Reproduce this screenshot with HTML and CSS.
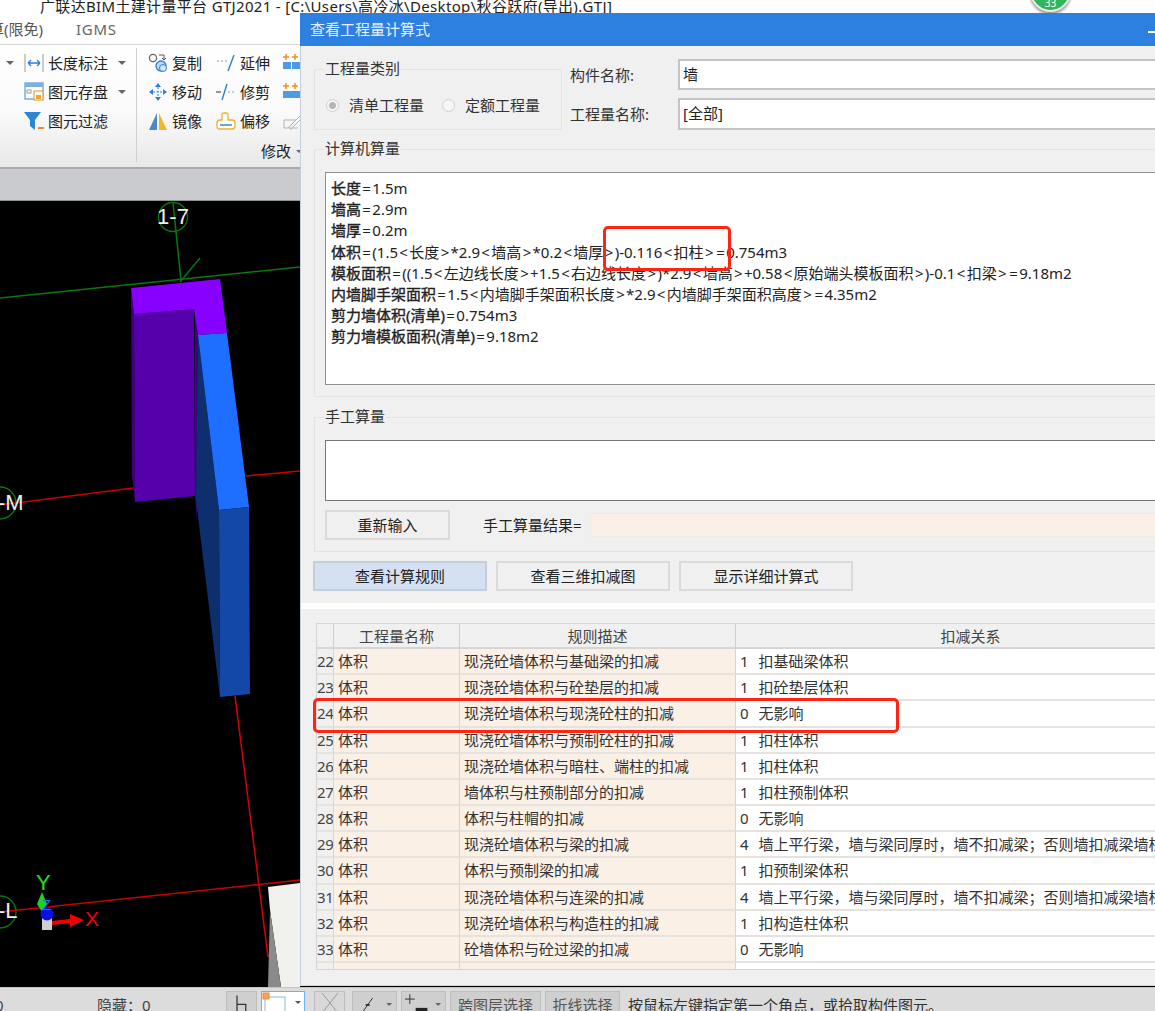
FILE: index.html
```html
<!DOCTYPE html>
<html lang="zh">
<head>
<meta charset="utf-8">
<title>查看工程量计算式</title>
<link rel="stylesheet" href="styles.css">
</head>
<body>
<div class="app">
  <div class="titlebar"><span>广联达BIM土建计量平台 GTJ2021 - [C:\Users\高冷冰\Desktop\秋谷跃府(导出).GTJ]</span></div>
  <div class="menubar"><span class="menu-a">算(限免)</span><span class="menu-b">IGMS</span></div>
  <div class="ribbon">
    <div class="rgroup rgroup-a">
      <div class="tool"><svg class="ico" viewBox="0 0 20 20"><path d="M1 1v18M19 1v18" stroke="#9a9a9a" fill="none"/><path d="M4 10h12M4 10l3-3M4 10l3 3M16 10l-3-3M16 10l-3 3" stroke="#2d7fd8" stroke-width="1.3" fill="none"/></svg><span>长度标注</span><i class="caret"></i></div>
      <div class="tool"><svg class="ico" viewBox="0 0 20 20"><rect x="1" y="1" width="18" height="16" fill="#fff" stroke="#6fa8e0" stroke-width="1.4"/><rect x="1" y="1" width="18" height="4" fill="#7db0e6"/><rect x="3" y="8" width="4" height="3" fill="none" stroke="#999"/><rect x="10" y="9" width="9" height="9" fill="#fff" stroke="#e8a33c" stroke-width="1.2"/><rect x="12" y="13" width="5" height="4" fill="#f0a030"/></svg><span>图元存盘</span><i class="caret"></i></div>
      <div class="tool"><svg class="ico" viewBox="0 0 20 20"><path d="M0 1h17l-6 8v10l-5-4V9z" fill="#2b86d6"/><path d="M14 16h6v2h-6z" fill="#f08a30"/></svg><span>图元过滤</span></div>
      <i class="caret caret-left"></i>
    </div>
    <div class="rgroup rgroup-b">
      <div class="rgrid">
        <div class="tool"><svg class="ico" viewBox="0 0 20 20"><circle cx="5" cy="5" r="3.6" fill="#fff" stroke="#666" stroke-width="1.3"/><circle cx="13" cy="13" r="5" fill="#bcd9f2" stroke="#2d7fd8" stroke-width="1.3"/><circle cx="15" cy="15" r="3.5" fill="#d6e8f8" stroke="#2d7fd8"/><path d="M11 2h5v4M14 5l2 2 2-2" stroke="#555" fill="none"/></svg><span>复制</span></div>
        <div class="tool"><svg class="ico" viewBox="0 0 20 20"><path d="M10 1l-3 4h6zM10 19l-3-4h6zM1 10l4-3v6zM19 10l-4-3v6z" fill="#2d7fd8"/><path d="M10 5v10M5 10h10" stroke="#2d7fd8" stroke-dasharray="2 1.5"/></svg><span>移动</span></div>
        <div class="tool"><svg class="ico" viewBox="0 0 20 20"><path d="M9 2v17H1z" fill="#4a86d0"/><path d="M11 2v17h8z" fill="#f6b822"/></svg><span>镜像</span></div>
        <div class="tool"><svg class="ico" viewBox="0 0 20 20"><path d="M1 8h12" stroke="#8aa0b8" stroke-dasharray="2 2" fill="none"/><path d="M18 2l-6 16" stroke="#2d7fd8" stroke-width="1.4"/></svg><span>延伸</span></div>
        <div class="tool"><svg class="ico" viewBox="0 0 20 20"><path d="M0 10h5" stroke="#333"/><path d="M12 10h8" stroke="#8aa0b8" stroke-dasharray="2 2"/><path d="M11 2L6 18" stroke="#2d7fd8" stroke-width="1.4"/></svg><span>修剪</span></div>
        <div class="tool"><svg class="ico" viewBox="0 0 20 20"><path d="M6 9V4q0-2 2-2h2q2 0 2 2v5h4q3 0 3 3v3q0 3-3 3H3q-2 0-2-3v-3q0-3 3-3z" fill="#fff" stroke="#f0b030" stroke-width="1.3"/><path d="M4 14h12" stroke="#6fa8e0" stroke-width="2"/></svg><span>偏移</span></div>
        <div class="tool tool-icon"><svg class="ico" viewBox="0 0 20 20"><path d="M3 1v6M0 4h6M12 1v6M9 4h6" stroke="#f09020" stroke-width="1.5"/><path d="M0 9h8v7H0zM9 9h8v7H9z" fill="#4f9be2"/></svg></div>
        <div class="tool tool-icon"><svg class="ico" viewBox="0 0 20 20"><path d="M3 1v6M0 4h6M12 1v6M9 4h6" stroke="#f09020" stroke-width="1.5"/><path d="M0 9h20v7H0z" fill="#4f9be2"/></svg></div>
        <div class="tool tool-icon"><svg class="ico" viewBox="0 0 20 20"><path d="M1 17V9l12-0M1 17h14M5 17l12-12 2 2L7 19" stroke="#b4b4b4" fill="none"/></svg></div>
      </div>
      <div class="rlabel"><span>修改</span><i class="caret caret-small"></i></div>
    </div>
  </div>
  <div class="band"></div>
  <div class="viewport">
    <svg class="scene" viewBox="0 201 300 786">
      <path d="M0 298L300 267" stroke="#0a780a" stroke-width="1.5"/>
      <path d="M173 203l8 77M180 282l20-24" stroke="#0a780a" stroke-width="1.5"/>
      <circle cx="173" cy="217" r="14.5" fill="none" stroke="#0a780a" stroke-width="1.3"/>
      <text class="lbl" x="173" y="224" text-anchor="middle">1-7</text>
      <path d="M0 505L133 488M246 476L300 471" stroke="#c80000" stroke-width="1.5"/>
      <circle cx="0" cy="503" r="16" fill="none" stroke="#0a780a" stroke-width="1.3"/>
      <text class="lbl" x="-2" y="510">-M</text>
      <path d="M235 696l33 261" stroke="#d80000" stroke-width="1.5"/>
      <path d="M0 912L300 880" stroke="#c80000" stroke-width="1.5"/>
      <circle cx="0" cy="912" r="16" fill="none" stroke="#0a780a" stroke-width="1.3"/>
      <text class="lbl" x="-2" y="918">-L</text>
      <path d="M131 288L134 314L135 502L132 475Z" fill="#3f0082"/>
      <path d="M134 314L194 309L195 496L135 502Z" fill="#5500ab"/>
      <path d="M195 309L198 335L197 520L195 496Z" fill="#3f0082"/>
      <path d="M131 288L220 279L227 333L198 335L194 309L134 314Z" fill="#8800ff"/>
      <path d="M198 335L219 510L220 697L196 500Z" fill="#0d2f6e"/>
      <path d="M198 335L227 333L249 507L219 510Z" fill="#1e6fff"/>
      <path d="M219 510L249 507L250 694L220 697Z" fill="#1448a8"/>
      <path d="M268 887L300 883V987H281L270 910Z" fill="#f0f0ec"/>
      <path d="M270 910L281 987H268Z" fill="#8a8a8a"/>
      <path d="M42 892l-5 12 5 8 5-8z" fill="#1fd01f"/>
      <rect x="42" y="918" width="10" height="12" fill="#cfcfcf"/>
      <circle cx="47" cy="914" r="6.5" fill="#0a10e0"/>
      <path d="M52 921l18-2v-5l14 6-14 7v-4l-18 2z" fill="#f00000"/>
      <text class="axis axis-y" x="36" y="890">Y</text>
      <text class="axis axis-z" x="42" y="910">Z</text>
      <text class="axis axis-x" x="85" y="926">X</text>
    </svg>
  </div>
  <div class="statusbar">
    <span class="st-zero">0</span>
    <span class="st-hidden">隐藏：0</span>
    <span class="st-btn st-h"><svg class="st-ico" viewBox="0 0 16 16"><path d="M4 2v14M4 9h7v7" stroke="#333" fill="none"/></svg></span>
    <span class="st-btn st-sel"><svg class="st-ico-wide" viewBox="0 0 40 20"><rect x="2" y="5" width="20" height="18" fill="#fff" stroke="#8ab6e6"/><rect x="0" y="1" width="6" height="6" fill="#f4a460" stroke="#e88a30"/><path d="M32 9h6l-3 3z" fill="#555"/></svg></span>
    <span class="st-btn st-x"><svg class="st-ico" viewBox="0 0 20 20"><path d="M2 0l16 20M18 0L2 20" stroke="#9a9a9a" fill="none"/></svg></span>
    <span class="st-btn st-tool"><svg class="st-ico-wide" viewBox="0 0 44 20"><path d="M10 20L20 6" stroke="#333"/><path d="M13 13h4" stroke="#333" stroke-width="2"/><path d="M34 11h6l-3 3z" fill="#666"/></svg></span>
    <span class="st-btn st-tool"><svg class="st-ico-wide" viewBox="0 0 44 20"><path d="M8 2v10M3 7h10" stroke="#333"/><path d="M14 16h12v4H14z" fill="#222"/><path d="M34 11h6l-3 3z" fill="#666"/></svg></span>
    <span class="st-btn st-text st-a">跨图层选择</span>
    <span class="st-btn st-text st-b">折线选择</span>
    <span class="st-hint">按鼠标左键指定第一个角点，或拾取构件图元。</span>
  </div>
</div>

<div class="badge"><span>33</span></div>

<div class="dialog">
  <div class="dlg-title"><span>查看工程量计算式</span><i class="dlg-min"></i></div>
  <div class="dlg-top">
    <fieldset class="fs fs-type">
      <legend>工程量类别</legend>
      <div class="radios">
        <span class="radio radio-on"></span><span class="r-text">清单工程量</span>
        <span class="radio radio-2"></span><span class="r-text">定额工程量</span>
      </div>
    </fieldset>
    <div class="form">
      <label>构件名称:</label><div class="field f1">墙</div>
      <label>工程量名称:</label><div class="field f2">[全部]</div>
    </div>
  </div>
  <fieldset class="fs fs-calc">
    <legend>计算机算量</legend>
    <div class="calc">
      <div><b>长度</b><u>=</u>1.5m</div>
      <div><b>墙高</b><u>=</u>2.9m</div>
      <div><b>墙厚</b><u>=</u>0.2m</div>
      <div><b>体积</b><u>=</u>(1.5<u>&lt;</u>长度<u>&gt;</u>*2.9<u>&lt;</u>墙高<u>&gt;</u>*0.2<u>&lt;</u>墙厚<u>&gt;</u>)-0.116<u>&lt;</u>扣柱<u>&gt;</u><u>=</u>0.754m3</div>
      <div><b>模板面积</b><u>=</u>((1.5<u>&lt;</u>左边线长度<u>&gt;</u>+1.5<u>&lt;</u>右边线长度<u>&gt;</u>)*2.9<u>&lt;</u>墙高<u>&gt;</u>+0.58<u>&lt;</u>原始端头模板面积<u>&gt;</u>)-0.1<u>&lt;</u>扣梁<u>&gt;</u><u>=</u>9.18m2</div>
      <div><b>内墙脚手架面积</b><u>=</u>1.5<u>&lt;</u>内墙脚手架面积长度<u>&gt;</u>*2.9<u>&lt;</u>内墙脚手架面积高度<u>&gt;</u><u>=</u>4.35m2</div>
      <div><b>剪力墙体积(清单)</b><u>=</u>0.754m3</div>
      <div><b>剪力墙模板面积(清单)</b><u>=</u>9.18m2</div>
    </div>
  </fieldset>
  <fieldset class="fs fs-manual">
    <legend>手工算量</legend>
    <div class="manual-box"></div>
    <div class="manual-row">
      <button class="btn btn-reset">重新输入</button>
      <span class="manual-label">手工算量结果=</span>
      <div class="manual-result"></div>
    </div>
  </fieldset>
  <div class="actions">
    <button class="btn btn-act btn-on">查看计算规则</button>
    <button class="btn btn-act">查看三维扣减图</button>
    <button class="btn btn-act">显示详细计算式</button>
  </div>
  <div class="stripe"></div>
  <div class="lower">
    <div class="grid">
      <div class="row head"><div></div><div>工程量名称</div><div>规则描述</div><div>扣减关系</div></div>
      <div class="row"><div>22</div><div>体积</div><div>现浇砼墙体积与基础梁的扣减</div><div>1&nbsp;&nbsp;扣基础梁体积</div></div>
      <div class="row"><div>23</div><div>体积</div><div>现浇砼墙体积与砼垫层的扣减</div><div>1&nbsp;&nbsp;扣砼垫层体积</div></div>
      <div class="row"><div>24</div><div>体积</div><div>现浇砼墙体积与现浇砼柱的扣减</div><div>0&nbsp;&nbsp;无影响</div></div>
      <div class="row"><div>25</div><div>体积</div><div>现浇砼墙体积与预制砼柱的扣减</div><div>1&nbsp;&nbsp;扣柱体积</div></div>
      <div class="row"><div>26</div><div>体积</div><div>现浇砼墙体积与暗柱、端柱的扣减</div><div>1&nbsp;&nbsp;扣柱体积</div></div>
      <div class="row"><div>27</div><div>体积</div><div>墙体积与柱预制部分的扣减</div><div>1&nbsp;&nbsp;扣柱预制体积</div></div>
      <div class="row"><div>28</div><div>体积</div><div>体积与柱帽的扣减</div><div>0&nbsp;&nbsp;无影响</div></div>
      <div class="row"><div>29</div><div>体积</div><div>现浇砼墙体积与梁的扣减</div><div>4&nbsp;&nbsp;墙上平行梁，墙与梁同厚时，墙不扣减梁；否则墙扣减梁墙柱相交部分</div></div>
      <div class="row"><div>30</div><div>体积</div><div>体积与预制梁的扣减</div><div>1&nbsp;&nbsp;扣预制梁体积</div></div>
      <div class="row"><div>31</div><div>体积</div><div>现浇砼墙体积与连梁的扣减</div><div>4&nbsp;&nbsp;墙上平行梁，墙与梁同厚时，墙不扣减梁；否则墙扣减梁墙柱相交部分</div></div>
      <div class="row"><div>32</div><div>体积</div><div>现浇砼墙体积与构造柱的扣减</div><div>1&nbsp;&nbsp;扣构造柱体积</div></div>
      <div class="row"><div>33</div><div>体积</div><div>砼墙体积与砼过梁的扣减</div><div>0&nbsp;&nbsp;无影响</div></div>
      <div class="row tail"><div></div><div></div><div></div><div></div></div>
    </div>
  </div>
</div>

<div class="mark mark-a"></div>
<div class="mark mark-b"></div>
</body>
</html>
```

FILE: styles.css
```css
* { box-sizing: border-box; }
html, body { margin: 0; padding: 0; }
body {
  position: relative;
  width: 1155px;
  height: 1011px;
  overflow: hidden;
  background: #000;
  color: #222;
  font: 15px/20px "Noto Sans", "Noto Sans CJK SC", sans-serif;
}
b { font-weight: 400; -webkit-text-stroke: 0.35px #222; }
i { display: block; font-style: normal; }
u { text-decoration: none; padding: 0 1.35px; }

.app { display: flex; flex-direction: column; width: 1155px; height: 1011px; }
.titlebar { position: relative; z-index: 1; height: 13px; padding-left: 40px; line-height: 13px; letter-spacing: 0.33px; white-space: nowrap; flex: none; background: #fff; }
.menubar { height: 32px; background: #fff; border-bottom: 1px solid #d6d6d6; display: flex; align-items: center; color: #555; flex: none; white-space: nowrap; }
.menu-a { margin-left: -11px; width: 87px; }
.menu-b { color: #666; letter-spacing: 0.7px; }

.ribbon { height: 122px; display: flex; flex: none; background: linear-gradient(#fff, #fafafa 55%, #e8e8e8); }
.rgroup { position: relative; padding-top: 3px; }
.rgroup-a { width: 137px; padding-left: 24px; }
.rgroup-a::after { content: ""; position: absolute; right: 0; top: 3px; bottom: 5px; width: 1px; background: #cfcfcf; }
.rgrid { display: grid; grid-template-rows: repeat(3, 29px); grid-template-columns: 68px 67px 40px; grid-auto-flow: column; padding-left: 11px; }
.tool { display: flex; align-items: center; height: 29px; gap: 4px; white-space: nowrap; }
.ico { width: 20px; height: 20px; flex: none; }
.rlabel { display: flex; align-items: center; height: 32px; padding-left: 124px; }
.caret { width: 0; height: 0; border: 4px solid transparent; border-top-color: #666; border-bottom: 0; margin-left: 6px; }
.caret-left { position: absolute; left: 6px; top: 16px; margin: 0; }
.caret-small { border-width: 3px; border-bottom: 0; margin-left: 5px; }

.band { height: 34px; flex: none; background: #c9cbce; border-top: 2px solid #a9abad; border-bottom: 1px solid #8f9194; }
.viewport { flex: 1; background: #000; overflow: hidden; }
.scene { display: block; width: 300px; height: 786px; overflow: hidden; }
.lbl { fill: #eee; font: 22px "Liberation Sans", sans-serif; }
.axis { font: 22px "Liberation Sans", sans-serif; }
.axis-y { fill: #22e022; }
.axis-z { fill: #1a6cff; font-size: 15px; }
.axis-x { fill: #f00000; font-size: 21px; }

.statusbar { height: 24px; flex: none; background: #dcdcdc; display: flex; align-items: flex-start; overflow: hidden; padding-top: 3px; white-space: nowrap; color: #444; border-top: 1px solid #c4c4c4; }
.st-zero { margin-left: -5px; width: 102px; padding-top: 4px; }
.st-hidden { width: 129px; padding-top: 4px; }
.st-btn { display: block; height: 26px; background: #cfcfcf; border: 1px solid #bdbdbd; flex: none; }
.st-h { width: 31px; }
.st-sel { width: 44px; margin-left: 4px; background: #fff; border: 1px solid #6db2f0; }
.st-x { width: 31px; margin-left: 9px; background: #d8d8d8; }
.st-tool { width: 45px; margin-left: 4px; }
.st-x + .st-tool { margin-left: 7px; }
.st-ico { display: block; width: 20px; height: 20px; margin: 1px 0 0 5px; }
.st-ico-wide { display: block; width: 100%; height: 20px; }
.st-text { padding: 3px 0 0; text-align: center; color: #555; }
.st-a { width: 91px; margin-left: 4px; }
.st-b { width: 75px; margin-left: 4px; }
.st-hint { margin-left: 8px; padding-top: 4px; color: #333; }

.badge { position: absolute; z-index: 2; left: 1030px; top: -29px; width: 41px; height: 41px; border-radius: 50%; background: #2fb65a; border: 2px solid #e8efe8; box-shadow: 0 2px 3px rgba(0,0,0,.45); color: #fff; font-size: 10px; line-height: 12px; text-align: center; }
.badge span { position: absolute; left: 0; right: 0; bottom: 1px; }

.dialog { position: absolute; z-index: 2; left: 300px; top: 13px; width: 900px; height: 973px; background: #f0f0f0; border-left: 1px solid #c3cfdc; border-bottom: 1px solid #cfd6de; }
.dlg-title { height: 33px; margin-left: -1px; background: #2d7fe0; color: #e8f1fb; line-height: 33px; padding-left: 10px; position: relative; }
.dlg-min { position: absolute; left: 848px; top: 18px; width: 8px; height: 2px; background: #fff; }

.dlg-top { display: flex; padding: 13px 0 0 13px; }
.fs { margin: 0; padding: 0; border: 1px solid #e4e4e4; min-width: 0; }
.fs legend { margin-left: 9px; padding: 0 1px; line-height: 20px; color: #333; transform: translateY(-1px); }
.fs-type { width: 248px; height: 71px; flex: none; }
.radios { display: flex; align-items: center; padding: 16px 0 0 11px; }
.radio { width: 13px; height: 13px; border-radius: 50%; background: #f6f6f6; border: 1px solid #d0d0d0; flex: none; }
.radio-on { background: radial-gradient(circle, #b5b5b5 0 3px, #f6f6f6 4px); }
.radio-2 { margin-left: 18px; }
.r-text { margin-left: 10px; color: #333; }
.form { display: grid; grid-template-columns: 108px 500px; grid-template-rows: 31px 32px; row-gap: 8px; margin-left: 8px; align-items: center; }
.form label { color: #333; }
.field { height: 100%; background: #fff; border: 2px solid #c4c4c4; padding: 0 3px; line-height: 27px; border-right: 0; }

.fs-calc { margin: 9px 0 0 13px; width: 880px; height: 258px; padding: 13px 10px 10px; }
.fs-calc legend, .fs-manual legend { margin-left: -1px; }
.calc { height: 213px; background: #fff; border: 1px solid #8f8f8f; padding: 5px 6px 4px 5px; line-height: 21.2px; white-space: nowrap; color: #222; }

.fs-manual { margin: 10px 0 0 13px; width: 880px; height: 145px; padding: 13px 10px 0; }
.manual-box { height: 61px; background: #fff; border: 1px solid #777; }
.manual-row { display: flex; align-items: center; margin-top: 9px; height: 30px; }
.btn { font: inherit; color: #222; background: #f0f0f0; border: 2px solid #dadada; padding: 0; }
.btn-reset { width: 125px; height: 30px; }
.manual-label { margin-left: 33px; width: 107px; white-space: nowrap; }
.manual-result { flex: 1; height: 24px; background: #faf0e6; border: 1px solid #f0ebe4; }

.actions { display: flex; gap: 9px; margin: 9px 0 0 12px; }
.btn-act { width: 174px; height: 30px; }
.btn-on { background: #d3e1f2; border-color: #c3cfdc; }

.stripe { height: 6px; margin-top: 12px; background: #fff; }
.lower { padding: 14px 0 0 15px; }
.grid { border: 1px solid #d5d5d5; width: 900px; background: #fff; border-right: 0; }
.row { display: grid; grid-template-columns: 17px 126px 276px 470px; height: 26.18px; line-height: 25px; white-space: nowrap; }
.row > div { border-bottom: 2px solid #e6e3df; border-right: 1px solid #d9d4cc; overflow: hidden; }
.row > div:nth-child(1) { background: #f0f0f0; letter-spacing: -0.4px; color: #444; border-right-color: #d5d5d5; }
.row > div:nth-child(2), .row > div:nth-child(3) { background: #faf0e6; padding-left: 4px; color: #333; }
.row > div:nth-child(4) { background: #fff; padding-left: 4px; border-right: 0; color: #333; word-spacing: 1px; }
.head { height: 25px; }
.head > div { background: #f0f0f0 !important; text-align: center; border-bottom: 2px solid #d5d5d5 !important; border-right: 1px solid #cfcfcf !important; padding-left: 0 !important; color: #444 !important; }
.tail { height: 6px; }
.tail > div { border-bottom: 0; }

.mark { position: absolute; z-index: 3; border: 3px solid #ff2414; border-radius: 5px; }
.mark-a { left: 603px; top: 226px; width: 128px; height: 45px; }
.mark-b { left: 313px; top: 698px; width: 586px; height: 35px; }
```
